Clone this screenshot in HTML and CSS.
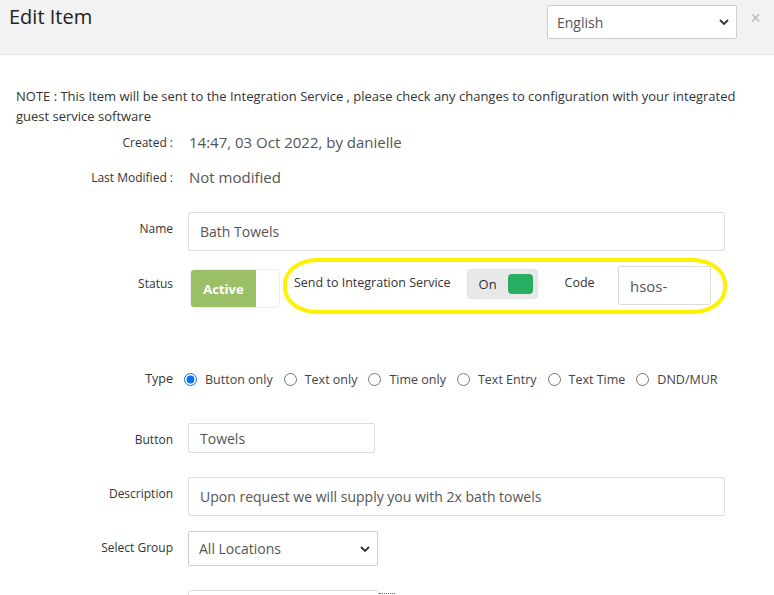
FILE: index.html
```html
<!DOCTYPE html>
<html lang="en">
<head>
  <meta charset="UTF-8">
  <meta name="viewport" content="width=device-width, initial-scale=1.0">
  <title>Edit Item</title>
  <link rel="stylesheet" href="styles.css">
</head>
<body>
  <div class="modal">
    <div class="modal-header">
      <h4 class="modal-title">Edit Item</h4>
      <div class="select-wrap lang">
        <select class="form-select">
          <option>English</option>
        </select>
        <svg class="chevron" width="10" height="6" viewBox="0 0 10 6"><path d="M1 1l4 4 4-4" fill="none" stroke="#333" stroke-width="1.8"/></svg>
      </div>
      <button class="close" type="button">&times;</button>
    </div>

    <div class="modal-body">
      <p class="note">NOTE : This Item will be sent to the Integration Service , please check any changes to configuration with your integrated guest service software</p>

      <div class="info-row">
        <span class="label">Created :</span>
        <span class="value">14:47, 03 Oct 2022, by danielle</span>
      </div>
      <div class="info-row">
        <span class="label">Last Modified :</span>
        <span class="value">Not modified</span>
      </div>

      <div class="form-row row-name">
        <label class="label" for="name">Name</label>
        <input class="form-control wide" id="name" type="text" value="Bath Towels">
      </div>

      <div class="form-row row-status">
        <span class="label">Status</span>
        <div class="status-toggle">
          <span class="status-on">Active</span>
          <span class="status-off"></span>
        </div>
        <div class="highlight">
          <span class="hl-label">Send to Integration Service</span>
          <div class="switch">
            <span>On</span>
            <span class="switch-knob"></span>
          </div>
          <span class="hl-label code-label">Code</span>
          <input class="form-control code" type="text" value="hsos-">
        </div>
      </div>

      <div class="form-row row-type">
        <span class="label">Type</span>
        <div class="radios">
          <label class="radio"><input type="radio" name="type" checked> Button only</label>
          <label class="radio"><input type="radio" name="type"> Text only</label>
          <label class="radio"><input type="radio" name="type"> Time only</label>
          <label class="radio"><input type="radio" name="type"> Text Entry</label>
          <label class="radio"><input type="radio" name="type"> Text Time</label>
          <label class="radio"><input type="radio" name="type"> DND/MUR</label>
        </div>
      </div>

      <div class="form-row row-button">
        <label class="label" for="button">Button</label>
        <input class="form-control small" id="button" type="text" value="Towels">
      </div>

      <div class="form-row row-desc">
        <label class="label" for="desc">Description</label>
        <input class="form-control wide" id="desc" type="text" value="Upon request we will supply you with 2x bath towels">
      </div>

      <div class="form-row row-group">
        <label class="label" for="group">Select Group</label>
        <div class="select-wrap group">
          <select class="form-select" id="group">
            <option>All Locations</option>
          </select>
          <svg class="chevron" width="10" height="6" viewBox="0 0 10 6"><path d="M1 1l4 4 4-4" fill="none" stroke="#333" stroke-width="1.8"/></svg>
        </div>
      </div>

      <div class="form-row row-last">
        <span class="label"></span>
        <div class="form-control last"></div>
        <span class="red-dots"></span>
      </div>
    </div>
  </div>
</body>
</html>
```

FILE: styles.css
```css
* {
  margin: 0;
  padding: 0;
  box-sizing: border-box;
}

body {
  font-family: "Open Sans", Arial, sans-serif;
  color: #333;
  background-color: white;
  overflow: hidden;
}

.modal-header {
  height: 55px;
  background-color: #f2f2f2;
  border-bottom: 1px solid #e3e3e3;
  display: flex;
  align-items: flex-start;
  padding: 0 0 0 9px;
}

.modal-title {
  font-size: 20px;
  font-weight: normal;
  color: #222;
  line-height: 26px;
  margin-top: 4px;
  flex: 1;
}

.select-wrap {
  position: relative;
}

.select-wrap .chevron {
  position: absolute;
  right: 8px;
  top: 50%;
  margin-top: -3px;
  pointer-events: none;
}

.form-select {
  appearance: none;
  -webkit-appearance: none;
  display: block;
  width: 100%;
  height: 100%;
  background-color: white;
  border: 1px solid #ccc;
  border-radius: 2px;
  font-family: inherit;
  color: #555;
}

.lang {
  width: 190px;
  height: 34px;
  margin-top: 5px;
}

.lang .form-select {
  font-size: 14px;
  padding-left: 9px;
}

.close {
  background: none;
  border: none;
  color: #bbb;
  font-size: 18px;
  font-family: Arial, sans-serif;
  width: 37px;
  line-height: 20px;
  margin-top: 8px;
  padding-left: 0;
  text-align: center;
}

.modal-body {
  padding: 31px 16px 0 16px;
}

.note {
  font-size: 13px;
  line-height: 20px;
  color: #333;
  margin-bottom: 4px;
}

.label {
  width: 172px;
  flex-shrink: 0;
  text-align: right;
  font-size: 12px;
  color: #333;
  padding-right: 15px;
}

.info-row {
  display: flex;
  align-items: center;
  height: 24px;
  margin-bottom: 11px;
}

.info-row .label {
  width: 173px;
  padding-right: 16px;
}

.value {
  font-size: 15px;
  color: #555;
}

.form-row {
  display: flex;
  align-items: flex-start;
}

.form-row .label {
  line-height: 18px;
  padding-top: 8px;
}

.form-control {
  height: 39px;
  border: 1px solid #ddd;
  border-radius: 2px;
  font-family: inherit;
  font-size: 14px;
  color: #555;
  padding: 0 11px;
  background-color: white;
}

.wide {
  width: 537px;
}

.row-name {
  margin-top: 23px;
}

.row-status {
  margin-top: 7px;
}

.status-toggle {
  display: flex;
  width: 90px;
  height: 39px;
  margin-top: 11px;
  margin-left: 2px;
  border: 1px solid #f0f0f0;
  border-radius: 4px;
  overflow: hidden;
}

.row-status .label {
  padding-top: 17px;
}

.status-on {
  width: 65px;
  background-color: #9abf66;
  color: white;
  font-weight: bold;
  font-size: 13px;
  display: flex;
  align-items: center;
  justify-content: center;
}

.status-off {
  flex: 1;
  background-color: white;
}

.highlight {
  display: flex;
  align-items: flex-start;
  width: 444px;
  height: 56px;
  margin-left: 3px;
  border: 4px solid #fff200;
  border-radius: 34px / 26px;
  padding: 4px 12px 0 7px;
}

.hl-label {
  font-size: 12.5px;
  line-height: 18px;
  margin-top: 8px;
  color: #333;
}

.switch {
  display: flex;
  align-items: center;
  width: 71px;
  height: 30px;
  margin-top: 3px;
  margin-left: 16px;
  background-color: #e8e8e8;
  border: 1px solid #e2e2e2;
  border-radius: 3px;
  font-size: 13px;
  padding-left: 11px;
}

.switch-knob {
  width: 25px;
  height: 20px;
  margin-left: auto;
  margin-right: 4px;
  background-color: #27ae60;
  border-radius: 4px;
}

.code-label {
  margin-left: 27px;
}

.code {
  width: 93px;
  margin-left: auto;
  font-size: 15px;
}

.row-type {
  margin-top: 56px;
  align-items: center;
}

.row-type .label {
  padding-top: 0;
  font-size: 12.5px;
}

.radios {
  display: flex;
  align-items: center;
  margin-left: -7px;
  font-size: 12.5px;
  color: #444;
}

.radio {
  display: flex;
  align-items: center;
  margin-right: 8px;
}

.radio input {
  width: 13px;
  height: 13px;
  margin: 0 8px 0 3px;
  accent-color: #0b6ef5;
}

.row-button {
  margin-top: 35px;
}

.small {
  width: 187px;
  height: 30px;
}

.row-desc {
  margin-top: 24px;
}

.row-group {
  margin-top: 15px;
}

.group {
  width: 190px;
  height: 35px;
}

.group .form-select {
  font-size: 14px;
  padding-left: 10px;
  border-color: #ccc;
}

.row-last {
  margin-top: 24px;
}

.last {
  width: 191px;
  height: 30px;
}

.red-dots {
  width: 16px;
  margin-top: 3px;
  border-top: 1px dotted #d33;
}
```
